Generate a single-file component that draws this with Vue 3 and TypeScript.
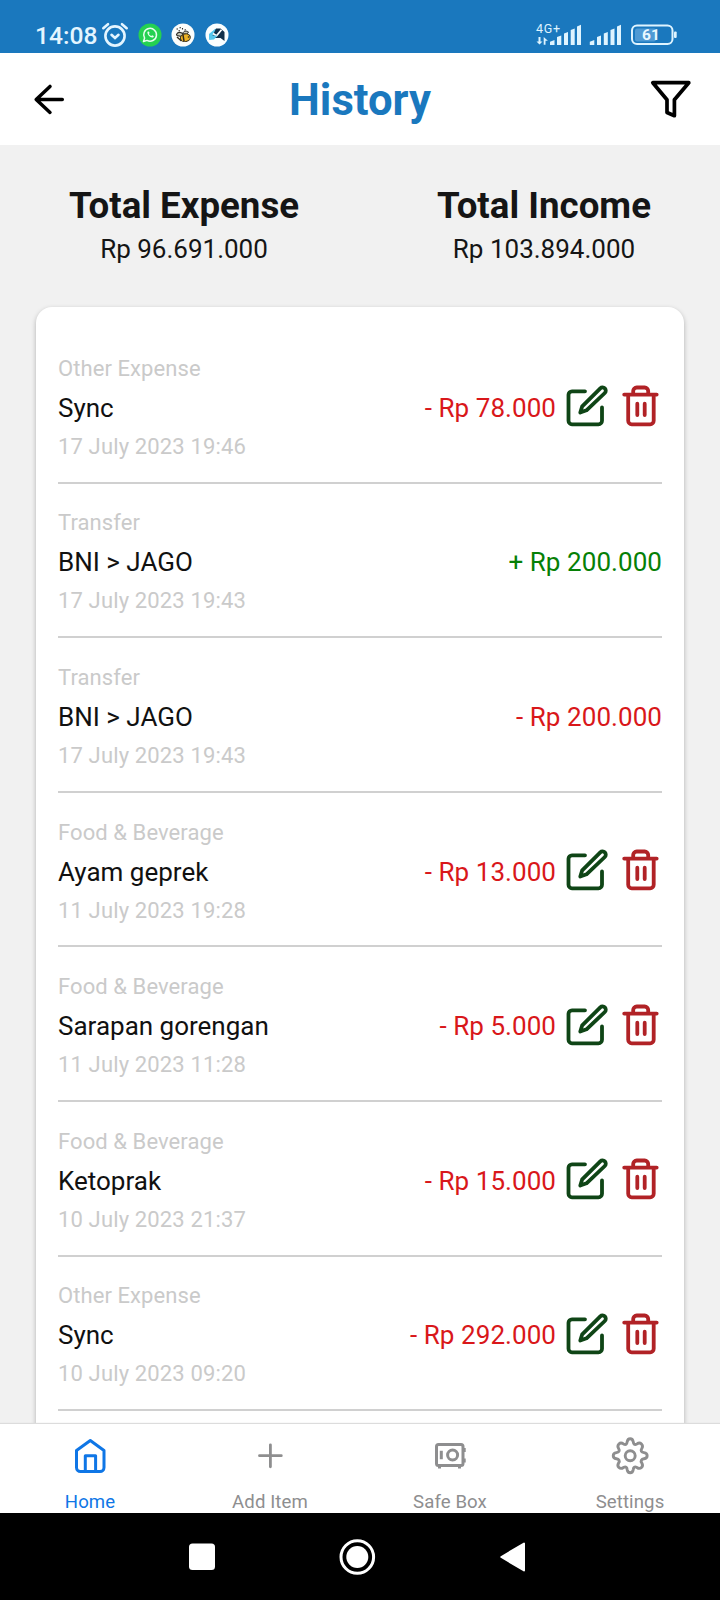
<script setup lang="ts">
interface Entry {
  category: string
  name: string
  date: string
  amount: string
  kind: 'in' | 'out'
  editable: boolean
}

const entries: Entry[] = [
  { category: 'Other Expense', name: 'Sync', date: '17 July 2023 19:46', amount: '- Rp 78.000', kind: 'out', editable: true },
  { category: 'Transfer', name: 'BNI > JAGO', date: '17 July 2023 19:43', amount: '+ Rp 200.000', kind: 'in', editable: false },
  { category: 'Transfer', name: 'BNI > JAGO', date: '17 July 2023 19:43', amount: '- Rp 200.000', kind: 'out', editable: false },
  { category: 'Food & Beverage', name: 'Ayam geprek', date: '11 July 2023 19:28', amount: '- Rp 13.000', kind: 'out', editable: true },
  { category: 'Food & Beverage', name: 'Sarapan gorengan', date: '11 July 2023 11:28', amount: '- Rp 5.000', kind: 'out', editable: true },
  { category: 'Food & Beverage', name: 'Ketoprak', date: '10 July 2023 21:37', amount: '- Rp 15.000', kind: 'out', editable: true },
  { category: 'Other Expense', name: 'Sync', date: '10 July 2023 09:20', amount: '- Rp 292.000', kind: 'out', editable: true },
]

const totals = [
  { label: 'Total Expense', value: 'Rp 96.691.000' },
  { label: 'Total Income', value: 'Rp 103.894.000' },
]
</script>

<template>
  <div class="screen">
    <div class="status">
      <span class="clock">14:08</span>
      <svg class="alarm" width="28" height="26" viewBox="0 0 28 26" fill="none" stroke="#e4f5ff" stroke-width="2.6" stroke-linecap="round">
        <circle cx="14" cy="14" r="9.6" />
        <path d="M2.3 6.2 7 2.2M25.7 6.2 21 2.2M10.5 12.8 14 16l3.5-3.2" />
      </svg>
      <svg class="app" width="24" height="24" viewBox="0 0 24 24">
        <circle cx="12" cy="12" r="11.5" fill="#25d151" />
        <path d="m5.5 18.5 1.1-3.4a6.4 6.4 0 1 1 2.4 2.3z" fill="none" stroke="#e9fff0" stroke-width="1.5" stroke-linejoin="round" />
        <path d="M9.5 8.8c-.8 2.300 2.700 6.200 5.300 5.700.8-.2 1.100-.9.900-1.500l-1.500-.8-1 .9c-1.300-.5-2-1.400-2.300-2.300l.7-.8-.7-1.600z" fill="#e9fff0" />
      </svg>
      <svg class="app" width="24" height="24" viewBox="0 0 24 24">
        <circle cx="12" cy="12" r="11.5" fill="#fbfdfb" />
        <path d="M5.5 11.5c1-2.500 4-3 6.500-.5l-1 2.500-5-1z" fill="#c9c9b8" stroke="#2b2925" stroke-width="1.1" />
        <path d="M11.5 10.5c1-2.500 4-3 6-1.500l-2 2.500z" fill="#c9c9b8" stroke="#2b2925" stroke-width="1" />
        <path d="M5.5 6h1.500M8.500 4.800h1.500M11.500 5v1.500M7.500 7.800h1.500M14.500 6.200l-.8 1.300" stroke="#2b2925" stroke-width="1.1" />
        <ellipse cx="14.3" cy="14.8" rx="5" ry="3.8" fill="#eeb325" stroke="#3c321a" stroke-width="1" transform="rotate(-12 14 14.5)" />
        <path d="m12 12 1 6M6 14l4.500 4" stroke="#30291a" stroke-width="1.5" />
        <circle cx="17.5" cy="14" r=".8" fill="#222" />
      </svg>
      <svg class="app" width="24" height="24" viewBox="0 0 24 24">
        <circle cx="12" cy="12" r="11.5" fill="#fafeff" />
        <path d="M4 16.500V11l6-5h5l-5 6z" fill="#54c7ee" />
        <path d="M11 5.500h4.500L19.500 9v9l-4-3H6.500z" fill="#12304a" />
        <path d="m8 10.500 3.500 2.300 5-6" fill="none" stroke="#fff" stroke-width="1.7" />
        <path d="m3.800 17 3.700-4.500h5L9 16.500z" fill="#54c7ee" />
      </svg>
      <span class="fill"></span>
      <svg class="signals" width="92" height="32" viewBox="530 19 92 32" fill="#dff4ff">
        <text x="536" y="33.3" font-size="12.5" textLength="24">4G+</text>
        <path d="M540.500 37v4.500h2l-3 3-3-3h2V37zM545.500 44.800h-1.800V37l4.200 3.800h-2.400z" />
        <path d="M550 45v-3.200l4.500-1.800v5zM557 45v-8l4.300-1.500V45zM564 45V33.500l4-1.500v13zM570.700 45V30l4-1.500V45zM577 45V26.500l4-1.700V45z" />
        <path d="M589.800 45v-3.200l4.500-1.800v5zM597 45v-8l4-1.500V45zM603.800 45V33.500l4-1.500v13zM610.500 45V30l4-1.500V45zM617 45V26.500l4-1.700V45z" />
      </svg>
      <svg class="battery" width="48" height="22" viewBox="0 0 48 22">
        <rect x="5" y="4.5" width="21" height="13" rx="2" fill="#4f9ad4" />
        <rect x="2" y="1.5" width="40.5" height="18.5" rx="5" fill="none" stroke="#dff4ff" stroke-width="2" />
        <rect x="44" y="7.5" width="2.7" height="6.5" rx="1" fill="#dff4ff" />
        <text x="21" y="16.3" text-anchor="middle" font-size="15.5" font-weight="700" fill="#e9f8ff">61</text>
      </svg>
    </div>

    <header class="header">
      <svg width="40" height="40" viewBox="0 0 40 40" fill="none" stroke="#000" stroke-width="3.5" stroke-linecap="round" stroke-linejoin="round">
        <path d="M33.3 20.400H7.200M21 7.400 7.200 20.400 21 33.400" />
      </svg>
      <h1>History</h1>
      <svg width="44" height="44" viewBox="0 0 44 44" fill="none" stroke="#000" stroke-width="3.7" stroke-linecap="round" stroke-linejoin="round">
        <path d="M3.8 5.700h36L25.400 22.700v16L18 35.500V22.700z" />
      </svg>
    </header>

    <main class="content">
      <section class="totals">
        <div v-for="t in totals" :key="t.label" class="total">
          <h2>{{ t.label }}</h2>
          <p>{{ t.value }}</p>
        </div>
      </section>

      <section class="card">
        <article v-for="(e, i) in entries" :key="i" class="entry">
          <div class="info">
            <span class="muted">{{ e.category }}</span>
            <span class="name">{{ e.name }}</span>
            <span class="muted date">{{ e.date }}</span>
          </div>
          <span class="amount" :class="e.kind">{{ e.amount }}</span>
          <template v-if="e.editable">
            <svg class="edit" width="42" height="42" viewBox="0 0 42 42" fill="none" stroke="#0f4516" stroke-width="3.8" stroke-linecap="round" stroke-linejoin="round">
              <path d="M19 6.300H6a3.500 3.500 0 0 0-3.500 3.500V35.800a3.500 3.500 0 0 0 3.500 3.500H32.500a3.500 3.500 0 0 0 3.500-3.500V22.500" />
              <path d="M34.300 3.400a3.200 3.200 0 0 1 4.500 4.600L20.500 25.300l-6.200 2.200 1.900-6.200z" />
            </svg>
            <svg class="trash" width="42" height="42" viewBox="0 0 42 42" fill="none" stroke="#b12226" stroke-width="3.8" stroke-linecap="round" stroke-linejoin="round">
              <path d="M4.200 9.600h32.500M8.200 9.600v26.200a3.500 3.500 0 0 0 3.500 3.500h18.500a3.500 3.500 0 0 0 3.500-3.500V9.600M13.200 9V6a3.500 3.500 0 0 1 3.500-3.500h8a3.500 3.500 0 0 1 3.500 3.500v3M17.300 18.700v11.300M24.700 18.700v11.300" />
            </svg>
          </template>
        </article>
      </section>
    </main>

    <nav class="tabs">
      <a class="tab active">
        <svg width="40" height="40" viewBox="0 0 40 40" fill="none" stroke="currentColor" stroke-width="3" stroke-linejoin="round">
          <path d="M20.3 5.500 34 15.500v17a4 4 0 0 1-4 4H10.500a4 4 0 0 1-4-4v-17zM15.300 36.500V20.700h10.300v15.800" />
        </svg>
        <span>Home</span>
      </a>
      <a class="tab">
        <svg width="40" height="40" viewBox="0 0 40 40" fill="none" stroke="currentColor" stroke-width="2.8" stroke-linecap="round">
          <path d="M20.4 9.800v22M9.500 20.700h21.800" />
        </svg>
        <span>Add Item</span>
      </a>
      <a class="tab">
        <svg width="40" height="40" viewBox="0 0 40 40" fill="none" stroke="currentColor" stroke-width="3">
          <rect x="6.5" y="9.6" width="26.5" height="21" rx="2" />
          <circle cx="22.6" cy="20" r="5" />
          <path d="M11.3 15.700v8.500M9.500 31v2.500M29.500 31v2.500M34.200 13v4M34.200 23.500v4" />
        </svg>
        <span>Safe Box</span>
      </a>
      <a class="tab">
        <svg width="40" height="40" viewBox="0 0 40 40" fill="none" stroke="currentColor" stroke-width="2.9" stroke-linejoin="round">
          <g transform="translate(0 .5)">
            <circle cx="20.2" cy="20.2" r="5" />
            <path d="M17.200 6.200c.6-4 5.400-4 6 0 .3 2.500 1.400 3.500 3.700 2.200 3.600-2.400 7 1 4.900 4.600-1.500 2.300-.4 3.700 2.200 4.100 4.200.7 4.200 5.500 0 6.200-2.600.4-3.700 1.800-2.200 4.100 2.100 3.600-1.300 7-4.900 4.600-2.300-1.300-3.400-.3-3.700 2.200-.6 4-5.400 4-6 0-.3-2.500-1.400-3.500-3.700-2.200-3.600 2.400-7-1-4.900-4.600 1.500-2.300.4-3.700-2.200-4.100-4.200-.7-4.200-5.500 0-6.200 2.600-.4 3.700-1.800 2.200-4.100-2.100-3.600 1.300-7 4.900-4.600 2.300 1.300 3.400.3 3.700-2.200z" />
          </g>
        </svg>
        <span>Settings</span>
      </a>
    </nav>

    <div class="system">
      <svg width="40" height="40" viewBox="0 0 40 40"><rect x="7" y="6.5" width="26" height="26.5" rx="3.5" fill="#fff" /></svg>
      <svg width="40" height="40" viewBox="0 0 40 40">
        <circle cx="20.3" cy="20" r="16.3" fill="none" stroke="#fff" stroke-width="3" />
        <circle cx="20.3" cy="20" r="11" fill="#fff" />
      </svg>
      <svg width="40" height="40" viewBox="0 0 40 40"><path d="M9.300 20 32 6.500v27z" fill="#fff" stroke="#fff" stroke-width="2" stroke-linejoin="round" /></svg>
    </div>
  </div>
</template>

<style scoped>
.screen {
  width: 720px;
  height: 1600px;
  display: flex;
  flex-direction: column;
  overflow: hidden;
  background: #f1f1f1;
  color: #151515;
  font-family: Roboto, "Liberation Sans", sans-serif;
}
svg {
  display: block;
  flex: none;
}
h1,
h2,
p {
  margin: 0;
}
.status {
  height: 53px;
  flex: none;
  box-sizing: border-box;
  padding: 17px 42px 0 35px;
  display: flex;
  align-items: center;
  background: #1a78be;
}
.clock {
  width: 66px;
  font-size: 24.6px;
  line-height: 35px;
  font-weight: 500;
  color: #e4f5ff;
}
.app {
  margin-left: 9.5px;
}
.alarm + .app {
  margin-left: 8.6px;
}
.fill {
  flex: 1;
}
.battery {
  margin-left: 8px;
}
.header {
  height: 92px;
  flex: none;
  box-sizing: border-box;
  padding: 0 27px 0 29px;
  display: flex;
  align-items: center;
  justify-content: space-between;
  background: #fff;
}
h1 {
  padding: 4px 0 0 2px;
  font-size: 43.6px;
  line-height: 52px;
  font-weight: 700;
  color: #1a78be;
}
.content {
  flex: 1;
  min-height: 0;
  overflow: hidden;
}
.totals {
  height: 162px;
  box-sizing: border-box;
  padding-top: 40px;
  display: grid;
  grid-template-columns: 368px 352px;
  text-align: center;
}
h2 {
  font-size: 36.7px;
  line-height: 42px;
  font-weight: 700;
}
.total p {
  margin-top: 6px;
  font-size: 26px;
  line-height: 32px;
}
.card {
  margin: 0 36px;
  height: 1200px;
  box-sizing: border-box;
  padding: 22px 22px 0;
  background: #fff;
  border-radius: 16px;
  box-shadow: 0 2px 5px rgba(0, 0, 0, 0.27);
}
.entry {
  height: 154.6px;
  box-sizing: border-box;
  padding-top: 5px;
  display: flex;
  align-items: center;
  border-bottom: 2px solid #d0d0d0;
}
.info {
  flex: 1;
  display: flex;
  flex-direction: column;
}
.muted {
  font-size: 22px;
  line-height: 36px;
  letter-spacing: 0.08px;
  color: #cacaca;
}
.date {
  letter-spacing: 0.14px;
}
.name {
  font-size: 26px;
  line-height: 42px;
  color: #111;
}
.amount {
  font-size: 26px;
  line-height: 42px;
  letter-spacing: 0.06px;
}
.in {
  color: #068006;
}
.out {
  color: #d9171a;
}
.edit,
.trash {
  margin-bottom: 3px;
}
.edit {
  margin-left: 10px;
}
.trash {
  margin-left: 12px;
}
.tabs {
  height: 89px;
  flex: none;
  display: grid;
  grid-template-columns: repeat(4, 1fr);
  background: #fff;
  box-shadow: 0 -1px 1px #dcdcdc;
}
.tab {
  display: flex;
  flex-direction: column;
  align-items: center;
  padding-top: 11px;
  color: #8e8e8f;
}
.active {
  color: #0f76e6;
}
.tab span {
  margin-top: 15px;
  font-size: 18.6px;
  line-height: 24px;
  letter-spacing: 0.1px;
}
.system {
  height: 87px;
  flex: none;
  display: flex;
  align-items: center;
  justify-content: center;
  gap: 115px;
  padding-right: 6px;
  background: #000;
}
</style>

<style>
body {
  background: #f1f1f1;
}
</style>
